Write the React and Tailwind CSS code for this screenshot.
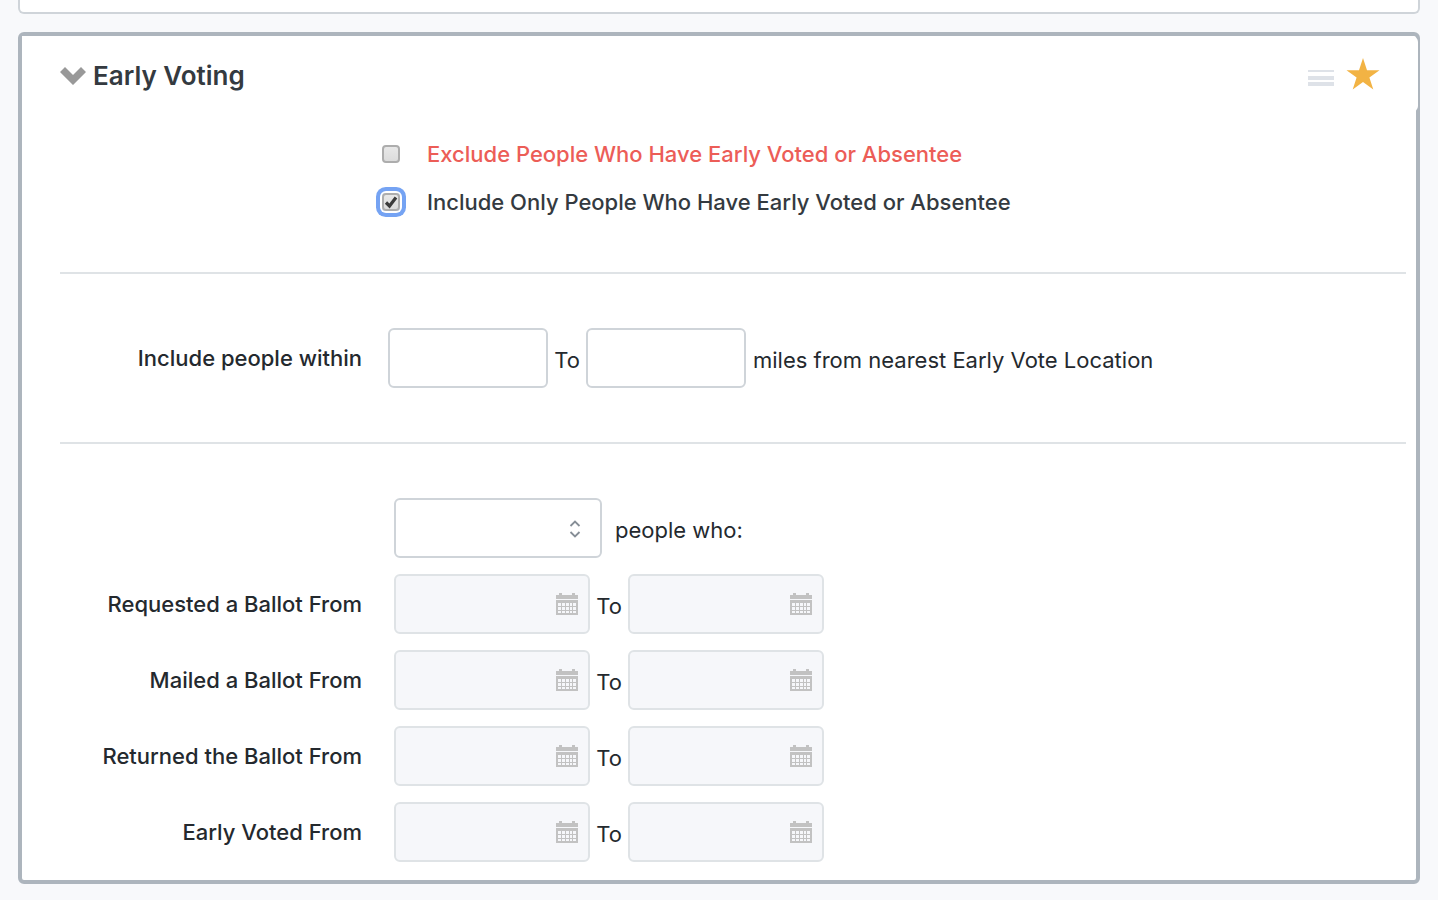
import { useState } from 'react'

const dateRows = [
  { id: 'requested', label: 'Requested a Ballot From' },
  { id: 'mailed', label: 'Mailed a Ballot From' },
  { id: 'returned', label: 'Returned the Ballot From' },
  { id: 'voted', label: 'Early Voted From' },
]

function CalendarIcon() {
  return (
    <svg
      viewBox="0 0 22 22"
      className="absolute right-3 top-1/2 h-[22px] w-[22px] -translate-y-1/2 text-[#c2c2c2] pointer-events-none"
      fill="currentColor"
      shapeRendering="crispEdges"
      aria-hidden="true"
    >
      <path d="M0 2h3V0h3v2h10V0h3v2h3v4H0z" />
      <path
        fillRule="evenodd"
        d="M0 7h22v15H0zM2 10v3h3v-3zM6 10v3h3v-3zM10 10v3h3v-3zM14 10v3h2v-3zM17 10v3h3v-3zM2 14v3h3v-3zM6 14v3h3v-3zM10 14v3h3v-3zM14 14v3h2v-3zM17 14v3h3v-3zM2 18v2h3v-2zM6 18v2h3v-2zM10 18v2h3v-2zM14 18v2h2v-2zM17 18v2h3v-2z"
      />
    </svg>
  )
}

function DateInput({ id, label }) {
  return (
    <div className="relative">
      <input
        id={id}
        type="text"
        aria-label={label}
        disabled
        className="block h-[60px] w-[196px] rounded-md border-2 border-[#dfe3e6] bg-[#f6f7fa] pl-3 pr-10"
      />
      <CalendarIcon />
    </div>
  )
}

function CheckRow({ id, checked, onChange, className, children }) {
  return (
    <div className="flex h-12 items-center gap-[27px] pl-[360px]">
      <div className="relative grid place-items-center">
        <input
          id={id}
          type="checkbox"
          checked={checked}
          onChange={onChange}
          className="h-[18px] w-[18px] appearance-none rounded border-2 border-[#adadad] bg-linear-to-b from-[#e8e8e8] to-[#dcdcdc] outline-none checked:ring-4 checked:ring-[#75a3f3] checked:ring-offset-2 checked:ring-offset-white"
        />
        {checked && (
          <svg viewBox="0 0 18 18" className="absolute h-[18px] w-[18px] pointer-events-none" aria-hidden="true">
            <path d="M4 9.5 7.5 13 14 4.5" fill="none" stroke="#3b3b3b" strokeWidth="3.2" />
          </svg>
        )}
      </div>
      <label htmlFor={id} className={className}>
        {children}
      </label>
    </div>
  )
}

export default function App() {
  const [filter, setFilter] = useState('include')
  const [open, setOpen] = useState(true)
  const [starred, setStarred] = useState(true)

  const toggle = (name) => setFilter(prev => (prev === name ? '' : name))

  return (
    <div className="min-h-screen bg-[#f8f9fb] px-[18px] pb-4 font-['Inter',sans-serif] text-[22px] leading-8 text-[#24292e]">
      {/* Bottom edge of the previous panel */}
      <div className="h-[14px] rounded-b-md border-2 border-t-0 border-[#cfd4d9] bg-white" />

      <section className="mt-[18px] rounded-md border-4 border-[#adb5bd] bg-white pb-[18px]">
        {/* The header runs slightly over the right border */}
        <header className="-mr-[2px] flex h-[76px] items-center justify-between rounded-r-md bg-white pl-[38px] pr-[38px]">
          <h2 className="pt-1">
            <button
              type="button"
              onClick={() => setOpen(!open)}
              aria-expanded={open}
              className="flex items-center gap-[7px] text-[26px] font-semibold text-[#343a40]"
            >
              <svg viewBox="0 0 26 18" className="h-[18px] w-[26px]" fill="#999" aria-hidden="true">
                <path d="M5 0 13 8 21 0 26 5 13 18 0 5z" />
              </svg>
              Early Voting
            </button>
          </h2>
          <div className="flex items-center gap-3">
            <button type="button" aria-label="Reorder" className="pt-2">
              <svg viewBox="0 0 26 16" className="h-4 w-[26px]" fill="#dee2e8" aria-hidden="true">
                <path d="M0 0h26v2H0zM0 6h26v4H0zM0 12h26v4H0z" />
              </svg>
            </button>
            <button type="button" aria-label="Favorite" aria-pressed={starred} onClick={() => setStarred(!starred)}>
              <svg viewBox="0 0 34 32" className="h-8 w-[34px]" fill={starred ? '#f2b344' : '#dee2e8'} aria-hidden="true">
                <path d="M17 0 21 12.2H33.5L23.4 19.5 27.3 31.5 17 24 6.7 31.5 10.6 19.5.5 12.2H13z" />
              </svg>
            </button>
          </div>
        </header>

        {open && (
          <>
            <div className="pb-[46px] pt-[18px]">
              <CheckRow
                id="exclude"
                checked={filter === 'exclude'}
                onChange={() => toggle('exclude')}
                className="font-medium text-[#ec5d57]"
              >
                Exclude People Who Have Early Voted or Absentee
              </CheckRow>
              <CheckRow
                id="include"
                checked={filter === 'include'}
                onChange={() => toggle('include')}
                className="font-medium text-[#343a40]"
              >
                Include Only People Who Have Early Voted or Absentee
              </CheckRow>
            </div>

            <hr className="ml-[38px] mr-[10px] border-t-2 border-[#dfe3e6]" />

            <div className="flex items-center py-[54px]">
              <label htmlFor="miles-from" className="w-[340px] text-right font-medium">
                Include people within
              </label>
              <input
                id="miles-from"
                type="text"
                className="ml-[26px] h-[60px] w-40 rounded-md border-2 border-[#cfd4d9] px-3"
              />
              <label htmlFor="miles-to" className="w-[38px] pt-1 text-center">To</label>
              <input
                id="miles-to"
                type="text"
                className="h-[60px] w-40 rounded-md border-2 border-[#cfd4d9] px-3"
              />
              <span className="pl-[7px] pt-1">miles from nearest Early Vote Location</span>
            </div>

            <hr className="ml-[38px] mr-[10px] border-t-2 border-[#dfe3e6]" />

            <div className="flex flex-col gap-4 pt-[54px]">
              <div className="flex items-center pl-[372px]">
                <div className="relative">
                  <select
                    id="mode"
                    defaultValue=""
                    className="block h-[60px] w-[208px] appearance-none rounded-md border-2 border-[#cfd4d9] bg-white pl-3 pr-10"
                  >
                    <option value=""></option>
                    <option value="include">Include</option>
                    <option value="exclude">Exclude</option>
                  </select>
                  <svg
                    viewBox="0 0 12 18"
                    className="absolute right-[21px] top-[22px] h-[18px] w-3 pointer-events-none"
                    fill="none"
                    stroke="#868e96"
                    strokeWidth="1.8"
                    aria-hidden="true"
                  >
                    <path d="M1.5 6 6 1.5 10.5 6M1.5 12 6 16.5 10.5 12" />
                  </svg>
                </div>
                <label htmlFor="mode" className="pl-[13px] pt-1">people who:</label>
              </div>

              {dateRows.map(({ id, label }) => (
                <div key={id} className="flex items-center">
                  <label htmlFor={`${id}-from`} className="mr-8 w-[340px] text-right font-medium">
                    {label}
                  </label>
                  <DateInput id={`${id}-from`} label={label} />
                  <label htmlFor={`${id}-to`} className="w-[38px] pt-1 text-center">To</label>
                  <DateInput id={`${id}-to`} label={`${label}, to`} />
                </div>
              ))}
            </div>
          </>
        )}
      </section>
    </div>
  )
}
